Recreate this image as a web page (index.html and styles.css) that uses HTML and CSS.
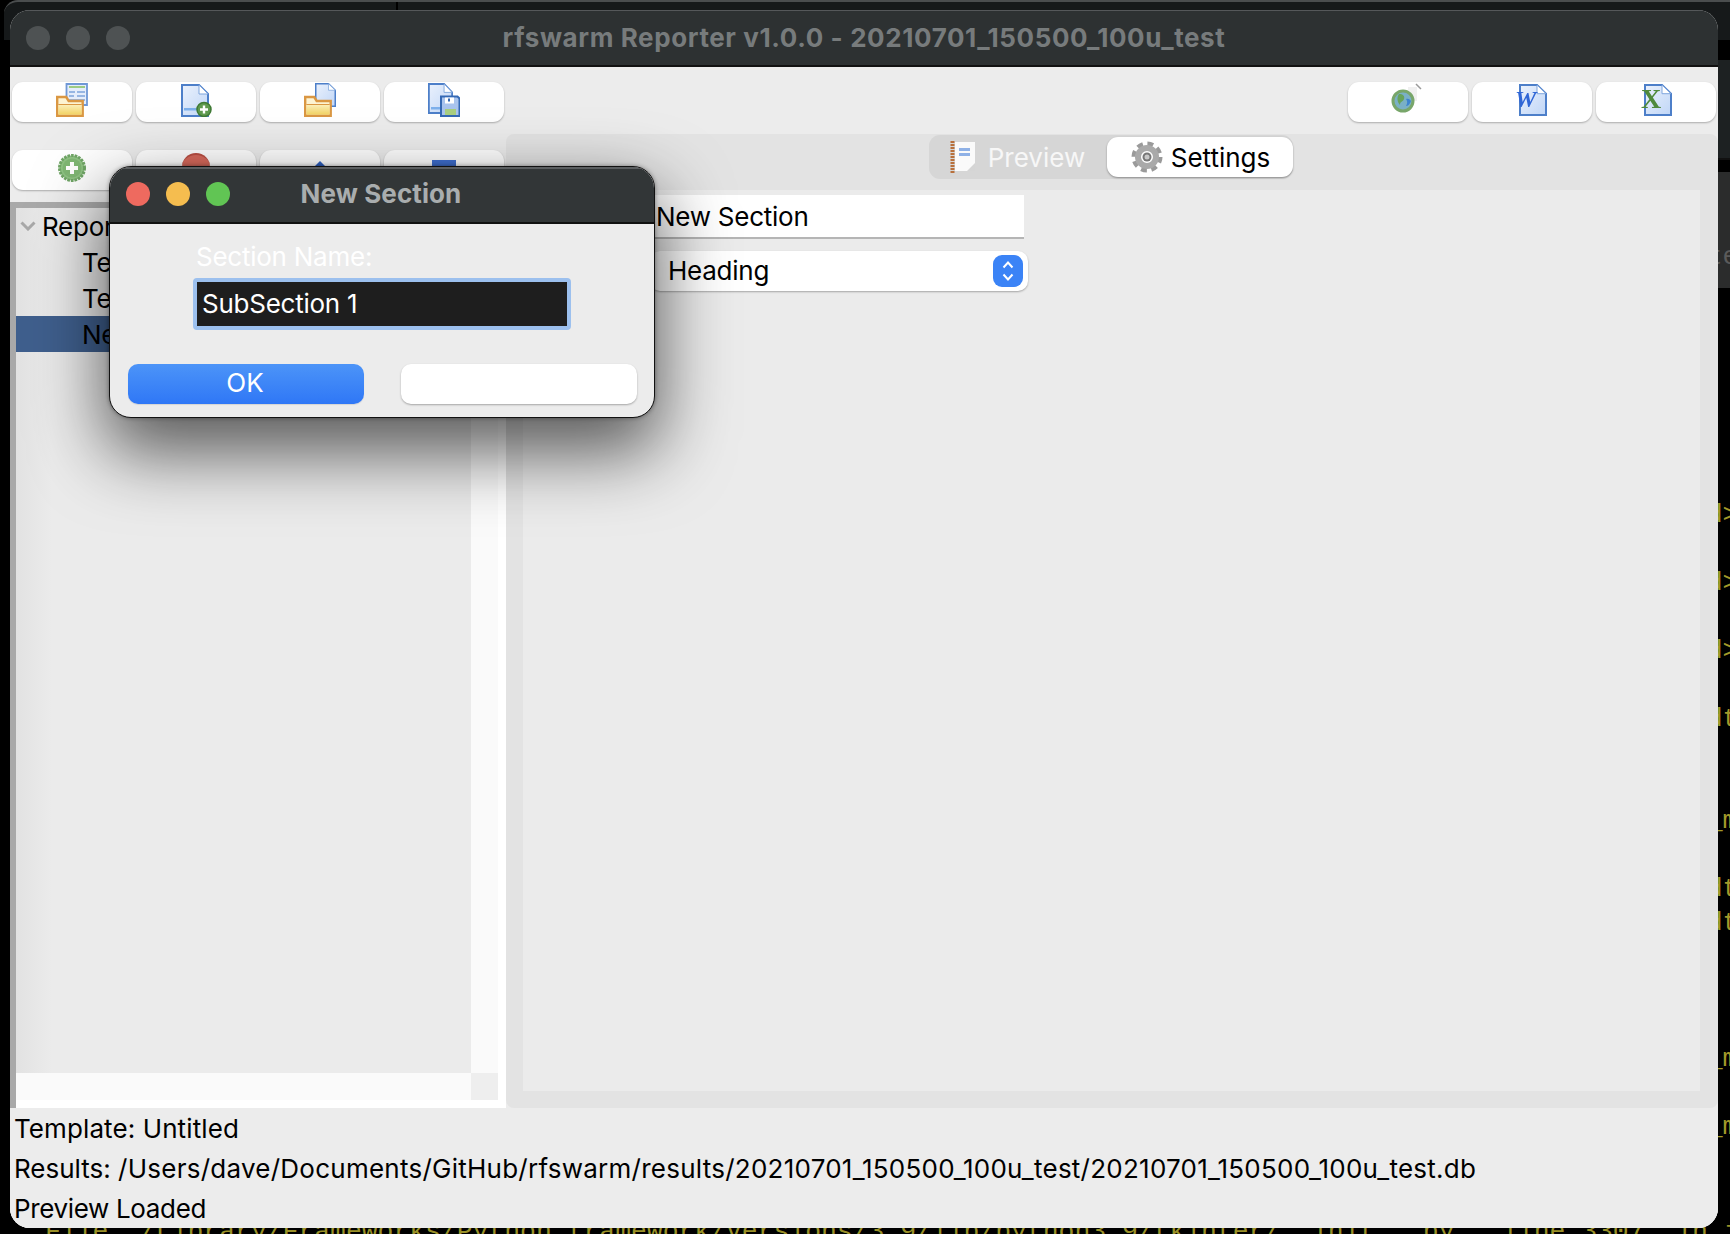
FILE: index.html
```html
<!DOCTYPE html>
<html lang="en">
<head>
<meta charset="utf-8">
<title>rfswarm Reporter</title>
<link rel="stylesheet" href="styles.css">
</head>
<body>
<svg class="defs" width="0" height="0" aria-hidden="true">
  <defs>
    <linearGradient id="folderFill" x1="0" y1="0" x2="0" y2="1"><stop offset="0" stop-color="#fbeeb8"/><stop offset="1" stop-color="#f2d364"/></linearGradient>
    <linearGradient id="docFill" x1="0" y1="0" x2="1" y2="1"><stop offset="0" stop-color="#eaf1fc"/><stop offset="1" stop-color="#c0d6f7"/></linearGradient>
    <symbol id="i-plus" viewBox="0 0 28 28">
      <circle cx="14" cy="14" r="12.5" fill="#8fc283" stroke="#6fa565" stroke-width="3" stroke-dasharray="2.6 1"/>
      <circle cx="14" cy="14" r="9.5" fill="#7fb673"/>
      <path d="M14 8v12M8 14h12" stroke="#fff" stroke-width="4"/>
    </symbol>
    <symbol id="i-folder" viewBox="0 0 28 23" preserveAspectRatio="none">
      <path d="M1.200 21.800V3h9l2.500 4h14v14.800z" fill="#fdf3d2" stroke="#da9743" stroke-width="2.400"/>
      <path d="M2.400 11h23.200v9.600H2.400z" fill="url(#folderFill)"/>
      <path d="M2.400 10.500h23.200" stroke="#da9743" stroke-width="1"/>
    </symbol>
    <symbol id="i-report-open" viewBox="0 0 32 34">
      <path d="M10.500 1h20.500v21H10.500z" fill="#e4edfb" stroke="#6f98d6" stroke-width="1.800"/>
      <path d="M13 4h16" stroke="#9ccb84" stroke-width="2"/>
      <path d="M13 9h6M13 13h5M21 9h8M21 13h8M13 17h16" stroke="#7ca4dc" stroke-width="1.500"/>
      <use href="#i-folder" x="0" y="11" width="28" height="23"/>
    </symbol>
    <symbol id="i-doc" viewBox="0 0 28 33" preserveAspectRatio="none">
      <path d="M1 1h17l9 9v22H1z" fill="url(#docFill)" stroke="#4d7fc9" stroke-width="2"/>
      <path d="M18 1v9h9z" fill="#fff" stroke="#7ea5dc" stroke-width="1"/>
    </symbol>
    <symbol id="i-new" viewBox="0 0 32 34">
      <use href="#i-doc" x="1" y="1" width="28" height="33"/>
      <path d="M4 25h17v2.500H4z" fill="#7db0ec"/>
      <circle cx="24" cy="26.500" r="7" fill="#5f9a4e" stroke="#3f7a35" stroke-width="1.500"/>
      <path d="M24 22.500v8M20 26.500h8" stroke="#fff" stroke-width="2.400"/>
    </symbol>
    <symbol id="i-open" viewBox="0 0 32 34">
      <use href="#i-doc" x="11" y="0" width="21" height="24"/>
      <use href="#i-folder" x="0" y="11" width="28" height="23"/>
    </symbol>
    <symbol id="i-save" viewBox="0 0 32 34">
      <use href="#i-doc" x="0" y="0" width="25" height="31"/>
      <path d="M3 24h12v2.500H3z" fill="#7db0ec"/>
      <path d="M13 13.500h16.500l2 2v17.500H13z" fill="#a9c4ee" stroke="#3569b4" stroke-width="2"/>
      <path d="M17 14.500h9v6h-9z" fill="#fff"/>
      <path d="M20 15.500h2v3h-2z" fill="#3569b4"/>
      <path d="M17 26h11v6H17z" fill="#a9ce80"/>
    </symbol>
    <symbol id="i-globe" viewBox="0 0 36 34">
      <path d="M26 1l5 5" stroke="#9a9a9a" stroke-width="1.500"/>
      <rect x="18" y="4" width="9" height="14" fill="#f0f0f0"/>
      <circle cx="13" cy="18" r="10" fill="#7ab0c6" stroke="#78a66a" stroke-width="3"/>
      <path d="M9 11c4 0 6 2 5 5s-4 2-4 6c-2-2-4-7-1-11z" fill="#67a35a"/>
      <path d="M16 16c3-1 4 1 5 2-1 3-3 5-5 5 1-2 2-4 0-7z" fill="#3d83cf"/>
    </symbol>
    <symbol id="i-word" viewBox="0 0 32 34">
      <use href="#i-doc" x="3" y="1" width="28" height="32"/>
      <text x="-1" y="24" class="glyph-w">W</text>
    </symbol>
    <symbol id="i-excel" viewBox="0 0 32 34">
      <use href="#i-doc" x="4" y="1" width="28" height="32"/>
      <text x="1" y="25" class="glyph-x">X</text>
    </symbol>
    <symbol id="i-note" viewBox="0 0 26 32">
      <rect x="5" y="1" width="20" height="29" fill="#fafafa"/>
      <path d="M2.500 0v32" stroke="#b8703c" stroke-width="4" stroke-dasharray="2 1"/>
      <path d="M9 7h11v3H9zM9 12h11v3H9z" fill="#8fb1e6"/>
      <path d="M17 30l8-8v8z" fill="#d5d5d5"/>
    </symbol>
    <symbol id="i-gear" viewBox="0 0 32 32">
      <circle cx="16" cy="16" r="12.500" fill="none" stroke="#9a9a9a" stroke-width="6" stroke-dasharray="5.500 4.320"/>
      <circle cx="16" cy="16" r="9" fill="none" stroke="#a9a9a9" stroke-width="6"/>
      <circle cx="16" cy="16" r="4.500" fill="#777"/>
      <circle cx="16" cy="16" r="2.500" fill="#c8c8c8"/>
    </symbol>
  </defs>
</svg>

<div class="desktop">
  <div class="back-top"><span class="back-rule"></span></div>
  <div class="back-side">
    <div class="back-dark"></div>
    <div class="back-bar"><span class="back-word">te</span></div>
  </div>
  <div class="term-right">
    <div class="tline">d&gt;</div>
    <div class="tline tgap1">d&gt;</div>
    <div class="tline tgap1">d&gt;</div>
    <div class="tline tgap1">dt</div>
    <div class="tline tgap2">_m</div>
    <div class="tline tgap1">dt</div>
    <div class="tline">dt</div>
    <div class="tline tgap3">_m</div>
    <div class="tline tgap1">_m</div>
  </div>
  <div class="term-bottom">File "/Library/Frameworks/Python.framework/Versions/3.9/lib/python3.9/tkinter/__init__.py", line 3307, in insert</div>

  <main class="window">
    <header class="titlebar">
      <div class="lights">
        <span class="light"></span><span class="light"></span><span class="light"></span>
      </div>
      <h1 class="win-title">rfswarm Reporter v1.0.0 - 20210701_150500_100u_test</h1>
    </header>

    <div class="win-body">
      <div class="toolbar">
        <div class="btn-row">
          <button class="tbtn"><svg class="ico"><use href="#i-report-open"/></svg></button>
          <button class="tbtn"><svg class="ico"><use href="#i-new"/></svg></button>
          <button class="tbtn"><svg class="ico"><use href="#i-open"/></svg></button>
          <button class="tbtn"><svg class="ico"><use href="#i-save"/></svg></button>
        </div>
        <div class="btn-row">
          <button class="tbtn"><svg class="ico ico-globe"><use href="#i-globe"/></svg></button>
          <button class="tbtn"><svg class="ico"><use href="#i-word"/></svg></button>
          <button class="tbtn"><svg class="ico"><use href="#i-excel"/></svg></button>
        </div>
      </div>

      <div class="main">
        <section class="left">
          <div class="btn-row">
            <button class="tbtn tbtn-top"><svg class="ico-add"><use href="#i-plus"/></svg></button>
            <button class="tbtn tbtn-top"><span class="mark-red"></span></button>
            <button class="tbtn tbtn-top"><span class="mark-up"></span></button>
            <button class="tbtn tbtn-top"><span class="mark-down"></span></button>
          </div>
          <div class="tree-frame">
            <div class="tree">
              <div class="row row-root"><svg class="chev" viewBox="0 0 16 10"><path d="M1.500 1.500L8 8l6.500-6.500" fill="none" stroke="#a8a8a8" stroke-width="3"/></svg>Report</div>
              <div class="row row-child">Template</div>
              <div class="row row-child">Test</div>
              <div class="row row-child row-sel">New Section</div>
            </div>
            <div class="vscroll"></div>
            <div class="hscroll"></div>
            <div class="corner"></div>
          </div>
        </section>

        <section class="right">
          <div class="tabs">
            <div class="segment">
              <div class="tab"><svg class="tab-note"><use href="#i-note"/></svg>Preview</div>
              <div class="tab tab-on"><svg class="tab-gear"><use href="#i-gear"/></svg>Settings</div>
            </div>
          </div>
          <div class="panel">
            <div class="entry">New Section</div>
            <div class="select">Heading
              <span class="stepper"><svg class="stepper-ico" viewBox="0 0 14 24"><path d="M2.500 8.500L7 3.500l4.500 5M2.500 15.500L7 20.500l4.500-5" fill="none" stroke="#fff" stroke-width="2"/></svg></span>
            </div>
          </div>
        </section>
      </div>

      <footer class="status">
        <div class="status-line status-template">Template: Untitled</div>
        <div class="status-line status-results">Results: <span class="status-path">/Users/dave/Documents/GitHub/rfswarm/results/20210701_150500_100u_test/20210701_150500_100u_test.db</span></div>
        <div class="status-line status-preview">Preview Loaded</div>
      </footer>
    </div>
  </main>

  <aside class="dialog">
    <header class="dlg-title">
      <div class="lights">
        <span class="light light-r"></span><span class="light light-y"></span><span class="light light-g"></span>
      </div>
      <h2 class="dlg-heading">New Section</h2>
    </header>
    <div class="dlg-body">
      <div class="dlg-label">Section Name:</div>
      <div class="dlg-input">SubSection 1</div>
      <div class="dlg-buttons">
        <button class="dbtn dbtn-ok">OK</button>
        <button class="dbtn"></button>
      </div>
    </div>
  </aside>
</div>
</body>
</html>
```
FILE: styles.css
```css
* { box-sizing: border-box; }
html, body { margin: 0; padding: 0; background: #000; }
body { font-family: "Inter", "Liberation Sans", sans-serif; font-size: 26px; letter-spacing: -0.25px; color: #000; overflow: hidden; }
.defs { position: absolute; }
.glyph-w { font: italic bold 24px "Liberation Serif", serif; fill: #2f66d6; }
.glyph-x { font: bold 28px "Liberation Serif", serif; fill: #4f8a3c; }

.desktop { position: relative; width: 1730px; height: 1234px; overflow: hidden; background: #000; }

/* windows behind the app */
.back-top { position: absolute; left: 4px; top: 0; width: 1726px; height: 40px; background: #16191a; border-top: 2px solid #4a4d4e; border-radius: 14px 0 0 0; }
.back-rule { position: absolute; left: 392px; top: 0; width: 2px; height: 10px; background: #000; }
.back-side { position: absolute; left: 1718px; top: 60px; width: 12px; height: 228px; display: flex; flex-direction: column; overflow: hidden; }
.back-dark { height: 100px; background: #1d2122; border-bottom: 2px solid #111; }
.back-bar { flex: 1; margin-top: 12px; background: #2b2c2c; padding-top: 68px; color: #5a5a5a; font: 26px/34px "Liberation Mono", monospace; letter-spacing: 0; }
.back-word { display: block; margin-left: -11px; white-space: nowrap; }

.term-right { position: absolute; left: 1707px; top: 498px; width: 23px; overflow: hidden; color: #a39a2a; font: 26px/34px "Liberation Mono", monospace; letter-spacing: 0; }
.tline { height: 34px; white-space: nowrap; }
.tgap1 { margin-top: 34px; }
.tgap2 { margin-top: 68px; }
.tgap3 { margin-top: 102px; }
.term-bottom { position: absolute; left: 45px; top: 1215px; width: 1685px; color: #9a9128; font: 26.400px/34px "Liberation Mono", monospace; letter-spacing: 0; white-space: pre; overflow: hidden; }

/* main window */
.window { position: absolute; left: 10px; top: 10px; width: 1708px; height: 1218px; display: flex; flex-direction: column; border-radius: 20px; overflow: hidden; background: #ececec; }
.titlebar { position: relative; flex: none; height: 57px; background: #2d3132; border-bottom: 2px solid #111; border-top: 1px solid #55585a; display: flex; align-items: center; justify-content: center; }
.lights { position: absolute; left: 16px; top: 15px; display: flex; gap: 16px; }
.light { width: 24px; height: 24px; border-radius: 50%; background: #4e5253; }
.light-r { background: #ee6a5f; }
.light-y { background: #f5bd4f; }
.light-g { background: #61c554; }
.win-title { margin: 0; font-size: 26px; font-weight: 700; line-height: 32px; letter-spacing: 0.6px; color: #777b7c; }

.win-body { flex: 1; min-height: 0; display: flex; flex-direction: column; background: #ececec; }
.toolbar { flex: none; height: 55px; padding: 15px 2px 0; display: flex; justify-content: space-between; }
.btn-row { display: flex; gap: 4px; }
.tbtn { width: 120px; height: 40px; padding: 0; border: 0; border-radius: 11px; background: #fff; box-shadow: 0 1px 2px rgba(0,0,0,.28); display: flex; justify-content: center; align-items: center; }
.tbtn-top { align-items: flex-start; position: relative; }
.ico { width: 32px; height: 34px; margin-top: -5px; filter: blur(.3px); }
.ico-globe { width: 36px; }
.ico-add { width: 28px; height: 28px; margin-top: 4px; filter: blur(.3px); }
.mark-red { width: 28px; height: 20px; margin-top: 3px; border-radius: 14px 14px 0 0; background: #d96a5c; border-top: 2px solid #b94e42; }
.mark-up { width: 0; height: 0; margin-top: 11px; border: 8px solid transparent; border-top: 0; border-bottom-color: #2f62c4; }
.mark-down { width: 24px; height: 10px; margin-top: 10px; background: #3f6fd0; }

.main { flex: 1; min-height: 0; margin-top: 12px; display: flex; }
.left { flex: none; width: 496px; display: flex; flex-direction: column; padding-left: 2px; padding-top: 16px; }
.tree-frame { flex: 1; min-height: 0; margin: 12px 0 0 -2px; border-left: 6px solid #a9a9a9; border-top: 6px solid #a9a9a9; padding: 0 8px 8px 0; background: #fff; display: grid; grid-template-columns: 1fr 27px; grid-template-rows: 1fr 27px; gap: 0; }
.tree { background: linear-gradient(90deg, #e2e2e2 0, #ebebeb 36px); padding-top: 0; overflow: hidden; }
.row { height: 36px; line-height: 38px; white-space: nowrap; }
.row-root { position: relative; padding-left: 26px; }
.chev { position: absolute; left: 4px; top: 13px; width: 16px; height: 10px; }
.row-child { padding-left: 66px; }
.row-sel { background: #3f5f8d; }
.vscroll { background: #fafafa; }
.hscroll { background: #fafafa; }
.corner { background: #eeeeee; }

.right { flex: 1; min-width: 0; display: flex; flex-direction: column; background: #e3e3e3; border-radius: 8px; padding: 0 18px 17px 17px; }
.tabs { flex: none; height: 56px; display: flex; justify-content: center; padding-top: 1px; }
.segment { height: 44px; margin-left: -2px; border-radius: 11px; background: #d6d6d6; display: flex; width: 364px; padding: 2px 0; letter-spacing: 0; }
.tab { flex: none; width: 178px; height: 40px; display: flex; align-items: center; justify-content: center; gap: 8px; color: #f7f7f7; }
.tab-on { width: 186px; padding-left: 2px; color: #000; background: #fff; border-radius: 11px; box-shadow: 0 1px 2px rgba(0,0,0,.35); }
.tab-note { width: 26px; height: 32px; margin-right: 4px; filter: blur(.3px); }
.tab-gear { width: 32px; height: 32px; filter: blur(.3px); }

.panel { flex: 1; min-height: 0; background: #ebebeb; padding: 5px 0 0 127px; }
.entry { width: 374px; height: 44px; line-height: 44px; padding-left: 6px; background: #fff; border-bottom: 2px solid #b5b5b5; }
.select { position: relative; width: 378px; height: 40px; margin-top: 12px; padding-left: 18px; line-height: 40px; background: #fff; border-radius: 10px; box-shadow: 0 1px 2px rgba(0,0,0,.3); }
.stepper { position: absolute; right: 5px; top: 4px; width: 30px; height: 32px; border-radius: 9px; background: #3b83f6; display: flex; align-items: center; justify-content: center; }
.stepper-ico { width: 14px; height: 24px; }

.status { flex: none; height: 120px; background: #ececec; padding-left: 4px; }
.status-line { height: 40px; line-height: 42px; white-space: nowrap; }
.status-template { letter-spacing: 0.1px; }
.status-results { letter-spacing: 0; }
.status-path { letter-spacing: 0.25px; }
.status-preview { letter-spacing: -0.35px; }

/* dialog */
.dialog { position: absolute; left: 109px; top: 166px; width: 546px; height: 252px; border-radius: 22px; background: #ececec; border: 1px solid #111; box-shadow: 0 30px 70px 5px rgba(0,0,0,.62), 0 0 4px rgba(0,0,0,.4); display: flex; flex-direction: column; overflow: hidden; }
.dlg-title { position: relative; flex: none; height: 57px; padding: 0 2px 4px 0; background: #323637; border-top: 2px solid #5b5e60; border-bottom: 2px solid #111; display: flex; align-items: center; justify-content: center; }
.dlg-title .lights { left: 16px; top: 13px; }
.dlg-heading { margin: 0; font-size: 26px; line-height: 32px; font-weight: 700; letter-spacing: 0.1px; color: #a9adae; }
.dlg-body { flex: 1; display: flex; flex-direction: column; padding: 16px 17px 0 18px; }
.dlg-label { height: 36px; padding-left: 68px; line-height: 34px; color: #fff; }
.dlg-input { width: 378px; height: 52px; margin: 2px 0 0 65px; padding-left: 5px; border: 4px solid #9cc0ee; border-radius: 4px; background: #1e1e1e; color: #fff; line-height: 44px; }
.dlg-buttons { display: flex; justify-content: space-between; margin-top: 34px; }
.dbtn { width: 236px; height: 40px; padding: 0 2px 4px 0; border: 0; border-radius: 10px; background: #fff; color: #fff; font: inherit; box-shadow: 0 1px 2px rgba(0,0,0,.3); }
.dbtn-ok { background: linear-gradient(#4c94f8, #2f77f6); box-shadow: 0 1px 1px rgba(0,0,0,.1); }
```
